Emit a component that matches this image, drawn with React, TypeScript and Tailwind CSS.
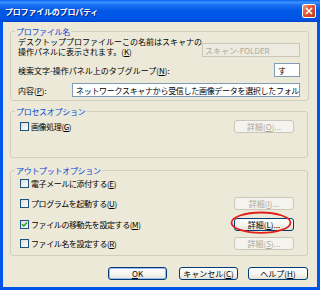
import React from "react";

function Btn({ children, disabled, def, w }: { children: React.ReactNode; disabled?: boolean; def?: boolean; w: string }) {
  const base = "h-[13px] rounded-[3px] border flex items-center justify-center text-[8px] leading-[9px] " + w;
  if (disabled) {
    return <div className={base + " border-[#C9C7BA] bg-[#F4F3EE] text-[#ACA899]"}>{children}</div>;
  }
  return (
    <div
      className={
        base +
        " border-[#003C74] bg-[linear-gradient(to_bottom,#FFFFFF_0%,#F4F4F0_60%,#E3E0D6_100%)] text-black" +
        (def ? " shadow-[inset_0_0_0_1px_#9EBBEF]" : "")
      }
    >
      {children}
    </div>
  );
}

function Check({ checked }: { checked?: boolean }) {
  return (
    <div className="w-[9px] h-[9px] border border-[#1C5180] bg-[linear-gradient(135deg,#DCDCD7_0%,#FFFFFF_100%)] flex items-center justify-center shrink-0">
      {checked && (
        <svg width="7" height="7" viewBox="0 0 7 7">
          <path d="M1 3.2 L2.8 5 L6 1.6" stroke="#21A121" strokeWidth="1.5" fill="none" />
        </svg>
      )}
    </div>
  );
}

function CheckRow({ label, checked, button, btnDisabled, mt }: { label: React.ReactNode; checked?: boolean; button?: React.ReactNode; btnDisabled?: boolean; mt: string }) {
  return (
    <div className={"h-[13px] flex items-center justify-between " + mt}>
      <div className="flex items-center gap-[2px]">
        <Check checked={checked} />
        <span className="text-[8px] leading-[9px] tracking-[-0.4px] text-black whitespace-nowrap">{label}</span>
      </div>
      {button && (
        <Btn disabled={btnDisabled} w="w-[60px]">
          {button}
        </Btn>
      )}
    </div>
  );
}

function Legend({ children }: { children: React.ReactNode }) {
  return (
    <legend className="ml-[4px] px-[1px] text-[8px] leading-[9px] tracking-[-0.3px] text-[#0046D5]">{children}</legend>
  );
}

export default function App() {
  return (
    <div className="w-[320px] h-[290px] flex flex-col bg-[#0055EA] font-['Noto_Sans_CJK_JP',sans-serif] overflow-hidden">
      <div className="h-[22px] flex items-center justify-between pl-[5px] pr-[4px] bg-[linear-gradient(to_bottom,#0A5FEF_0%,#3D95FF_10%,#1C6FF2_22%,#0058E6_50%,#0055E5_85%,#0046CF_100%)]">
        <span className="text-[8px] leading-[9px] font-bold text-white tracking-[-0.2px] [text-shadow:1px_1px_0_#0A1E8C]">
          プロファイルのプロパティ
        </span>
        <div className="w-[14px] h-[14px] rounded-[2px] border border-white bg-[linear-gradient(135deg,#F09A7E_0%,#E0552E_45%,#C43B18_100%)] flex items-center justify-center">
          <svg width="8" height="8" viewBox="0 0 8 8">
            <path d="M1 1 L7 7 M7 1 L1 7" stroke="white" strokeWidth="1.6" />
          </svg>
        </div>
      </div>
      <div className="relative flex-1 mx-[3px] mb-[3px] bg-[#ECE9D8] flex flex-col pl-[7px] pr-[9px]">
        {/* Group 1 */}
        <fieldset className="mt-[5px] h-[74px] border border-[#D0D0BF] rounded-[3px]">
          <Legend>プロファイル名</Legend>
          <div className="pl-[7px] pr-[8px] pt-[1px] text-[8px] leading-[9px] text-black">
            <div className="flex justify-between">
              <div className="whitespace-nowrap leading-[10px]">
                <div>デスクトッププロファイルーこの名前はスキャナの</div>
                <div>
                  操作パネルに表示されます。(<u>K</u>)
                </div>
              </div>
              <div className="mt-[6px] w-[98px] h-[14px] border border-[#C9C7BA] bg-[#EDEBE0] text-[#ACA899] pl-[2px] flex items-center whitespace-nowrap">
                スキャン-FOLDER
              </div>
            </div>
            <div className="mt-[6px] flex items-center justify-between">
              <span className="whitespace-nowrap">
                検索文字-操作パネル上のタブグループ(<u>N</u>):
              </span>
              <div className="w-[26px] h-[14px] border border-[#7F9DB9] bg-white pl-[3px] flex items-center">す</div>
            </div>
            <div className="mt-[6px] flex items-center justify-between">
              <span className="whitespace-nowrap">
                内容(<u>P</u>):
              </span>
              <div className="w-[228px] h-[14px] border border-[#7F9DB9] bg-white pl-[3px] flex items-center overflow-hidden whitespace-nowrap tracking-[-0.3px]">
                ネットワークスキャナから受信した画像データを選択したフォルダ
              </div>
            </div>
          </div>
        </fieldset>

        {/* Group 2 */}
        <fieldset className="mt-[6px] h-[51px] border border-[#D0D0BF] rounded-[3px]">
          <Legend>プロセスオプション</Legend>
          <div className="pl-[9px] pr-[13px] pt-[4px]">
            <CheckRow
              mt=""
              label={
                <>
                  画像処理(<u>G</u>)
                </>
              }
              button={
                <>
                  詳細(<u>O</u>)...
                </>
              }
              btnDisabled
            />
          </div>
        </fieldset>

        {/* Group 3 */}
        <fieldset className="mt-[8px] h-[90px] border border-[#D0D0BF] rounded-[3px]">
          <Legend>アウトプットオプション</Legend>
          <div className="pl-[9px] pr-[13px] pt-[2px]">
            <CheckRow
              mt=""
              label={
                <>
                  電子メールに添付する(<u>E</u>)
                </>
              }
            />
            <CheckRow
              mt="mt-[7px]"
              label={
                <>
                  プログラムを起動する(<u>U</u>)
                </>
              }
              button={
                <>
                  詳細(<u>I</u>)...
                </>
              }
              btnDisabled
            />
            <CheckRow
              mt="mt-[8px]"
              checked
              label={
                <>
                  ファイルの移動先を設定する(<u>M</u>)
                </>
              }
              button={
                <>
                  詳細(<u>L</u>)...
                </>
              }
            />
            <CheckRow
              mt="mt-[6px]"
              label={
                <>
                  ファイル名を設定する(<u>R</u>)
                </>
              }
              button={
                <>
                  詳細(<u>S</u>)...
                </>
              }
              btnDisabled
            />
          </div>
        </fieldset>

        {/* Bottom buttons */}
        <div className="mt-[11px] flex justify-end">
          <Btn def w="w-[59px]">
            <u>O</u>K
          </Btn>
          <div className="w-[12px]" />
          <Btn w="w-[59px]">
            キャンセル(<u>C</u>)
          </Btn>
          <div className="w-[10px]" />
          <Btn w="w-[60px]">
            ヘルプ(<u>H</u>)
          </Btn>
        </div>

        <svg className="absolute left-[227px] top-[189px] pointer-events-none" width="64" height="24" viewBox="0 0 64 24">
          <ellipse cx="31" cy="11.7" rx="29.5" ry="10.2" fill="none" stroke="#E3201B" strokeWidth="1.8" />
        </svg>
      </div>
    </div>
  );
}
